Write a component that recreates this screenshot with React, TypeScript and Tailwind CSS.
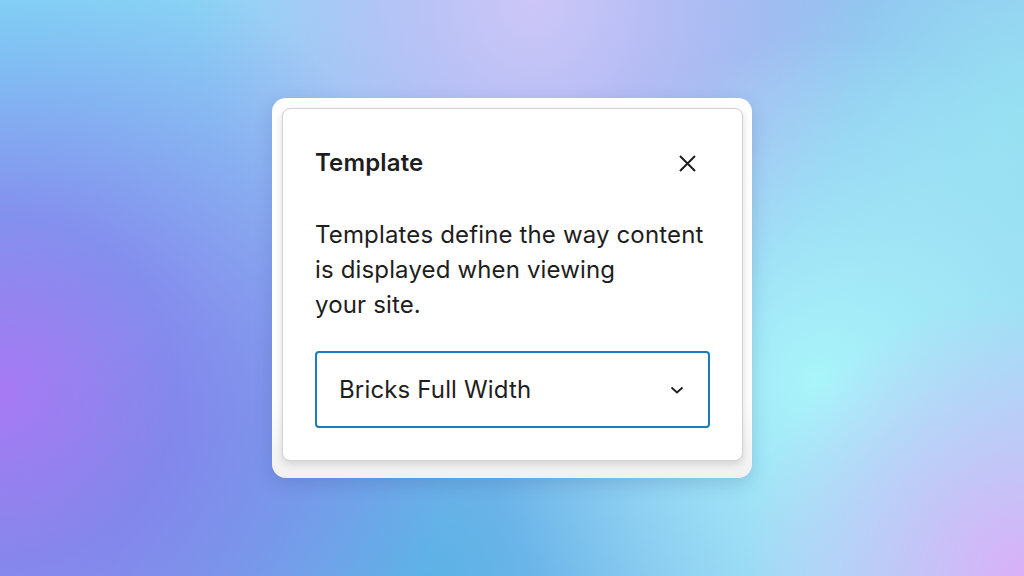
export default function App() {
  return (
    <div className="w-full h-[576px] flex items-center justify-center bg-[radial-gradient(circle_at_0%_68%,#a679f3_0%,rgba(130,120,235,0.75)_16%,transparent_42%),radial-gradient(ellipse_at_52%_0%,#cdc6f8_0%,transparent_45%),radial-gradient(circle_at_100%_100%,#d9b0f8_0%,transparent_24%),radial-gradient(circle_at_80%_66%,#a8f5fa_0%,transparent_38%),radial-gradient(circle_at_0%_8%,#7fe3f7_0%,transparent_38%),radial-gradient(circle_at_100%_20%,#96e0f2_0%,transparent_35%),radial-gradient(circle_at_42%_100%,#5cb2e6_0%,transparent_45%),linear-gradient(135deg,#9ad6f5,#8aa6ec_50%,#a2e4f5)]">
      <div className="w-[480px] h-[380px] bg-gradient-to-b from-white from-80% to-[#f1f1f1] rounded-[14px] pt-[10px] pl-[10px] pr-[9px] shadow-[0_6px_18px_rgba(40,60,120,0.18)]">
        <div
          className="bg-white border border-[#d2d2d2] rounded-[8px] pt-[40px] px-[32px] pb-[32px] text-[#1e1e1e] tracking-[0.15px] shadow-[0_3px_8px_rgba(0,0,0,0.14)]"
          style={{ fontFamily: 'Inter, "Noto Sans", sans-serif' }}
        >
          <div className="flex items-center justify-between h-[28px]">
            <h2 className="text-[24px] font-semibold leading-[28px]">Template</h2>
            <button className="mr-[13px] text-[#1e1e1e]" aria-label="Close">
              <svg width="19" height="19" viewBox="0 0 19 19" fill="none">
                <path d="M2 2L17 17M17 2L2 17" stroke="currentColor" strokeWidth="2" />
              </svg>
            </button>
          </div>
          <p className="mt-[40px] text-[24px] leading-[35px] whitespace-nowrap">
            Templates define the way content
            <br />
            is displayed when viewing
            <br />
            your site.
          </p>
          <div className="mt-[29px] h-[77px] border-2 border-[#1b7bbd] rounded-[4px] flex items-center justify-between pl-[22px] pr-[24px]">
            <span className="text-[24px]">Bricks Full Width</span>
            <svg width="14" height="8" viewBox="0 0 14 8" fill="none">
              <path d="M1.5 1.5L7 6.5L12.5 1.5" stroke="#1e1e1e" strokeWidth="1.8" />
            </svg>
          </div>
        </div>
      </div>
    </div>
  )
}
